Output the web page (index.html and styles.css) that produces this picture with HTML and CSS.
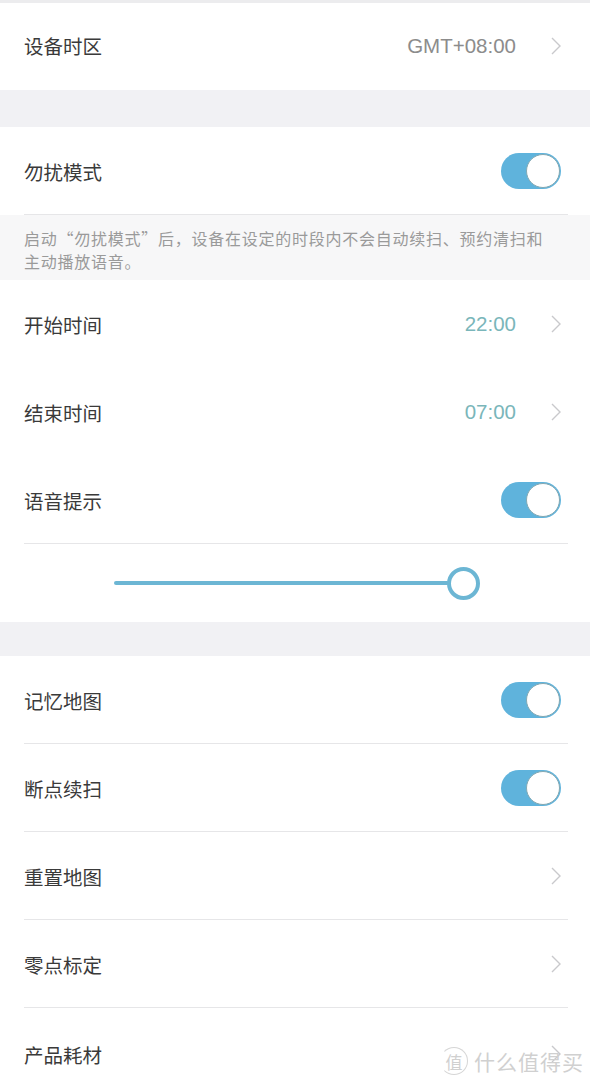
FILE: index.html
```html
<!DOCTYPE html>
<html lang="zh">
<head>
<meta charset="utf-8">
<link rel="stylesheet" href="styles.css">
</head>
<body>
<div class="page">
  <section class="group group-first">
    <div class="row">
      <span class="label">设备时区</span>
      <span class="value gray">GMT+08:00</span>
      <svg class="chev" viewBox="0 0 12 20" width="12" height="20"><path d="M2 2 L10 10 L2 18" fill="none" stroke="#c9c9cc" stroke-width="1.4"/></svg>
    </div>
  </section>

  <section class="group">
    <div class="row divided">
      <span class="label">勿扰模式</span>
      <span class="toggle"><span class="knob"></span></span>
    </div>
    <div class="note">启动“勿扰模式”后，设备在设定的时段内不会自动续扫、预约清扫和<br>主动播放语音。</div>
    <div class="row">
      <span class="label">开始时间</span>
      <span class="value teal">22:00</span>
      <svg class="chev" viewBox="0 0 12 20" width="12" height="20"><path d="M2 2 L10 10 L2 18" fill="none" stroke="#c9c9cc" stroke-width="1.4"/></svg>
    </div>
    <div class="row">
      <span class="label">结束时间</span>
      <span class="value teal">07:00</span>
      <svg class="chev" viewBox="0 0 12 20" width="12" height="20"><path d="M2 2 L10 10 L2 18" fill="none" stroke="#c9c9cc" stroke-width="1.4"/></svg>
    </div>
    <div class="row divided">
      <span class="label">语音提示</span>
      <span class="toggle"><span class="knob"></span></span>
    </div>
    <div class="slider-wrap">
      <div class="slider">
        <span class="track"></span>
        <span class="thumb"></span>
      </div>
    </div>
  </section>

  <section class="group">
    <div class="row divided">
      <span class="label">记忆地图</span>
      <span class="toggle"><span class="knob"></span></span>
    </div>
    <div class="row divided">
      <span class="label">断点续扫</span>
      <span class="toggle"><span class="knob"></span></span>
    </div>
    <div class="row divided">
      <span class="label">重置地图</span>
      <svg class="chev" viewBox="0 0 12 20" width="12" height="20"><path d="M2 2 L10 10 L2 18" fill="none" stroke="#c9c9cc" stroke-width="1.4"/></svg>
    </div>
    <div class="row divided">
      <span class="label">零点标定</span>
      <svg class="chev" viewBox="0 0 12 20" width="12" height="20"><path d="M2 2 L10 10 L2 18" fill="none" stroke="#c9c9cc" stroke-width="1.4"/></svg>
    </div>
    <div class="row row-last">
      <span class="label">产品耗材</span>
      <svg class="chev" viewBox="0 0 12 20" width="12" height="20"><path d="M2 2 L10 10 L2 18" fill="none" stroke="#c9c9cc" stroke-width="1.4"/></svg>
    </div>
  </section>

  <div class="watermark"><span class="wm-circle">值</span><span class="wm-text">什么值得买</span></div>
</div>
</body>
</html>
```

FILE: styles.css
```css
* { box-sizing: border-box; }
html, body {
  margin: 0;
  padding: 0;
  background: #f1f1f4;
}
body {
  font-family: "Noto Sans CJK SC", "Noto Sans", sans-serif;
  color: #333;
  width: 590px;
  height: 1080px;
  overflow: hidden;
}
.page {
  position: relative;
  display: flex;
  flex-direction: column;
  height: 1080px;
}
.group {
  background: #fff;
  display: flex;
  flex-direction: column;
}
.group-first {
  border-top: 3px solid #ececee;
  margin-bottom: 37px;
}
.group-first .row {
  height: 87px;
  padding-bottom: 2px;
}
.group + .group { margin-bottom: 34px; }
.group:last-of-type { margin-bottom: 0; }
.row {
  height: 88px;
  display: flex;
  align-items: center;
  padding: 0 28px 0 24px;
  position: relative;
}
.row.divided::after {
  content: "";
  position: absolute;
  left: 24px;
  right: 22px;
  bottom: 0;
  height: 1px;
  background: #e6e6e8;
}
.label {
  font-size: 19.5px;
  color: #3a3a3a;
  flex: 1;
}
.value {
  font-family: "Liberation Sans", Arial, sans-serif;
  font-size: 20.5px;
  margin-right: 34px;
}
.gray { color: #8c8c8c; }
.teal { color: #7ab6ba; }
.chev { display: block; }
.toggle {
  width: 60px;
  height: 36px;
  border-radius: 18px;
  background: #5fb3dc;
  position: relative;
  display: block;
  margin-right: 1px;
}
.knob {
  position: absolute;
  right: 1px;
  top: 1px;
  width: 34px;
  height: 34px;
  border-radius: 50%;
  background: #fff;
  border: 1.5px solid #84a9b3;
}
.note {
  background: #f7f7f8;
  color: #9a9a9a;
  font-size: 16px;
  letter-spacing: 0.75px;
  line-height: 23px;
  padding: 12px 6px 7px 24px;
  height: 65px;
  white-space: nowrap;
}
.slider-wrap {
  height: 78px;
  display: flex;
  align-items: center;
  padding-left: 114px;
}
.slider {
  width: 366px;
  height: 34px;
  display: flex;
  align-items: center;
}
.track {
  flex: 1;
  height: 4.5px;
  border-radius: 3px;
  background: #6cb6d4;
}
.thumb {
  width: 33px;
  height: 33px;
  border-radius: 50%;
  border: 4px solid #6cb6d4;
  background: #fff;
  margin-left: -2px;
}
.row-last { height: 92px; }
.watermark {
  position: absolute;
  right: 6px;
  bottom: 5px;
  display: flex;
  align-items: center;
  gap: 6px;
  color: #d0d0d0;
}
.wm-circle {
  width: 28px;
  height: 28px;
  border-radius: 50%;
  border: 1.5px solid #d6d6d6;
  border-left-color: transparent;
  display: flex;
  align-items: center;
  justify-content: center;
  font-size: 17px;
  line-height: 1;
}
.wm-text {
  font-size: 21px;
  letter-spacing: 1px;
  line-height: 1;
}
```
